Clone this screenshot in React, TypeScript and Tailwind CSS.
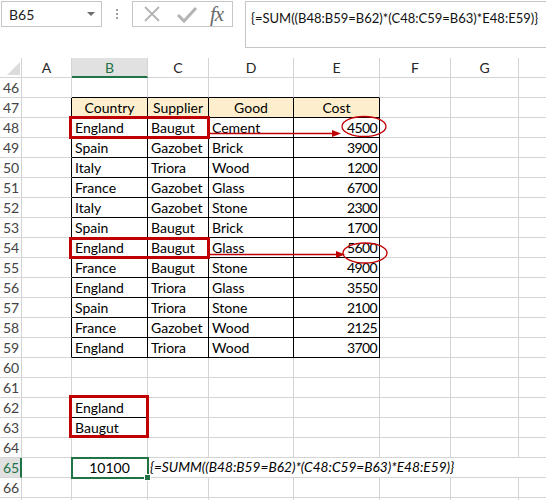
import React from 'react';

const COLS = ['A', 'B', 'C', 'D', 'E', 'F', 'G', ''];
const FIRST_ROW = 46;
const LAST_ROW = 67;

const data: [string, string, string, number][] = [
  ['England', 'Baugut', 'Cement', 4500],
  ['Spain', 'Gazobet', 'Brick', 3900],
  ['Italy', 'Triora', 'Wood', 1200],
  ['France', 'Gazobet', 'Glass', 6700],
  ['Italy', 'Gazobet', 'Stone', 2300],
  ['Spain', 'Baugut', 'Brick', 1700],
  ['England', 'Baugut', 'Glass', 5600],
  ['France', 'Baugut', 'Stone', 4900],
  ['England', 'Triora', 'Glass', 3550],
  ['Spain', 'Triora', 'Stone', 2100],
  ['France', 'Gazobet', 'Wood', 2125],
  ['England', 'Triora', 'Wood', 3700],
];

const bordered = (r: number, c: number) =>
  (r >= 47 && r <= 59 && c >= 2 && c <= 5) || ((r === 62 || r === 63) && c === 2);

type Cell = { text: string; align: 'left' | 'center' | 'right' };

function cellAt(r: number, c: number): Cell | null {
  if (r === 47) {
    const head = ['Country', 'Supplier', 'Good', 'Cost'];
    if (c >= 2 && c <= 5) return { text: head[c - 2], align: 'center' };
  }
  if (r >= 48 && r <= 59 && c >= 2 && c <= 5) {
    const v = data[r - 48][c - 2];
    return typeof v === 'number' ? { text: String(v), align: 'right' } : { text: v, align: 'left' };
  }
  if (r === 62 && c === 2) return { text: 'England', align: 'left' };
  if (r === 63 && c === 2) return { text: 'Baugut', align: 'left' };
  if (r === 65 && c === 2) return { text: '10100', align: 'center' };
  return null;
}

const FormulaBar = () => (
  <div className="flex items-start h-[58px] pl-[1px] pt-[1px] bg-white">
    <div className="w-[101px] h-[26px] border border-[#c6c6c6] flex items-center pl-[7px] pr-[6px] shrink-0">
      <span className="text-[14px] text-[#222]">B65</span>
      <span className="ml-auto w-0 h-0 border-l-[4px] border-r-[4px] border-t-[4px] border-l-transparent border-r-transparent border-t-[#6d6d6d]" />
    </div>
    <div className="w-[30px] h-[26px] flex flex-col items-center justify-center gap-[2px] shrink-0">
      <span className="w-[2px] h-[2px] bg-[#a0a0a0]" />
      <span className="w-[2px] h-[2px] bg-[#a0a0a0]" />
      <span className="w-[2px] h-[2px] bg-[#a0a0a0]" />
    </div>
    <div className="w-[101px] h-[26px] border border-[#c6c6c6] flex items-center shrink-0">
      <svg width="20" height="20" viewBox="0 0 20 20" className="ml-[9px]">
        <path d="M3 3 L17 17 M17 3 L3 17" stroke="#b4b4b4" strokeWidth="1.8" fill="none" />
      </svg>
      <svg width="22" height="20" viewBox="0 0 22 20" className="ml-[14px]">
        <path d="M2 11 L8 17 L20 4" stroke="#b4b4b4" strokeWidth="3" fill="none" />
      </svg>
      <span className="ml-[12px] text-[21px] leading-none italic text-[#6a6a6a] font-['Liberation_Serif',serif] tracking-[-1px]">fx</span>
    </div>
    <div className="ml-[12px] w-[330px] h-[47px] border border-[#c6c6c6] shrink-0 pl-[5px] pt-[3px]">
      <span className="text-[13px] text-[#111] whitespace-nowrap">{'{=SUM((B48:B59=B62)*(C48:C59=B63)*E48:E59)}'}</span>
    </div>
  </div>
);

const Sheet = () => {
  const rows: number[] = [];
  for (let r = FIRST_ROW; r <= LAST_ROW; r++) rows.push(r);

  return (
    <div className="grid grid-cols-[22px_50px_76px_61px_85px_86px_71px_68px_80px] auto-rows-[20px]">
      <div className="relative border-r border-b border-[#d4d4d4]">
        <svg className="absolute left-[7px] top-[4px]" width="13" height="13" viewBox="0 0 13 13">
          <polygon points="13,0 13,13 0,13" fill="#dcdcdc" />
        </svg>
      </div>
      {COLS.map((l, i) => (
        <div
          key={i}
          className={
            l === 'B'
              ? 'flex items-center justify-center bg-[#e1e1e1] text-[#217346] border-r border-[#d4d4d4] border-b-2 border-b-[#217346] text-[14px]'
              : 'flex items-center justify-center text-[#262626] border-r border-b border-[#d4d4d4] text-[14px]'
          }
        >
          {l}
        </div>
      ))}
      {rows.map((r) => {
        const cells: React.ReactNode[] = [];
        cells.push(
          <div
            key={`h${r}`}
            className={
              r === 65
                ? 'flex items-center pl-[3px] bg-[#e1e1e1] text-[#217346] border-r-2 border-r-[#217346] border-b border-b-[#d4d4d4] text-[14px]'
                : 'flex items-center pl-[3px] text-[#444] border-r border-b border-[#d4d4d4] text-[14px]'
            }
          >
            {r < 67 ? r : ''}
          </div>
        );
        for (let c = 1; c <= COLS.length; c++) {
          if (r === 65 && c === 3) {
            cells.push(
              <div key={`${r}-${c}`} className="col-span-6 border-b border-[#d4d4d4] flex items-center pl-[2px] whitespace-nowrap italic text-[13.7px] text-black">
                {'{=SUMM((B48:B59=B62)*(C48:C59=B63)*E48:E59)}'}
              </div>
            );
            c = 8;
            continue;
          }
          const right = bordered(r, c) || bordered(r, c + 1);
          const bottom = bordered(r, c) || bordered(r + 1, c);
          const cell = cellAt(r, c);
          const cls = [
            'flex items-center whitespace-nowrap overflow-hidden text-[14px] text-black',
            right ? 'border-r border-r-black' : 'border-r border-r-[#d4d4d4]',
            bottom ? 'border-b border-b-black' : 'border-b border-b-[#d4d4d4]',
            r === 47 && c >= 2 && c <= 5 ? 'bg-[#fdefce]' : '',
            cell?.align === 'right'
              ? 'justify-end pr-[2px] tracking-[-0.6px]'
              : cell?.align === 'center'
                ? 'justify-center'
                : 'pl-[3px]',
          ].join(' ');
          cells.push(
            <div key={`${r}-${c}`} className={cls}>
              {cell?.text}
            </div>
          );
        }
        return <React.Fragment key={r}>{cells}</React.Fragment>;
      })}
    </div>
  );
};

const Markup = () => (
  <svg className="absolute inset-0 pointer-events-none" width="546" height="500">
    <g fill="none" stroke="#c00000" strokeWidth="3">
      <rect x="70.5" y="117.5" width="138" height="20" />
      <rect x="70.5" y="238.5" width="138" height="19" />
      <rect x="70.5" y="396.5" width="77" height="40" />
    </g>
    <g fill="none" stroke="#c00000" strokeWidth="1.3">
      <ellipse cx="364" cy="126.5" rx="22" ry="10" />
      <ellipse cx="365" cy="253" rx="22" ry="10" />
      <line x1="210" y1="133.5" x2="333" y2="133.5" />
      <line x1="210" y1="254.5" x2="337" y2="254.5" />
    </g>
    <g fill="#c00000">
      <polygon points="332,130 341,133.5 332,137" />
      <polygon points="336,251 345,254.5 336,258" />
    </g>
    <rect x="72" y="458" width="76" height="20" fill="none" stroke="#217346" strokeWidth="2" />
    <rect x="144.5" y="474.5" width="6" height="6" fill="#217346" stroke="#fff" strokeWidth="1" />
  </svg>
);

export default function App() {
  return (
    <div className="relative w-[546px] h-[500px] overflow-hidden bg-white font-['Lato','Liberation_Sans',sans-serif]">
      <FormulaBar />
      <Sheet />
      <Markup />
    </div>
  );
}
